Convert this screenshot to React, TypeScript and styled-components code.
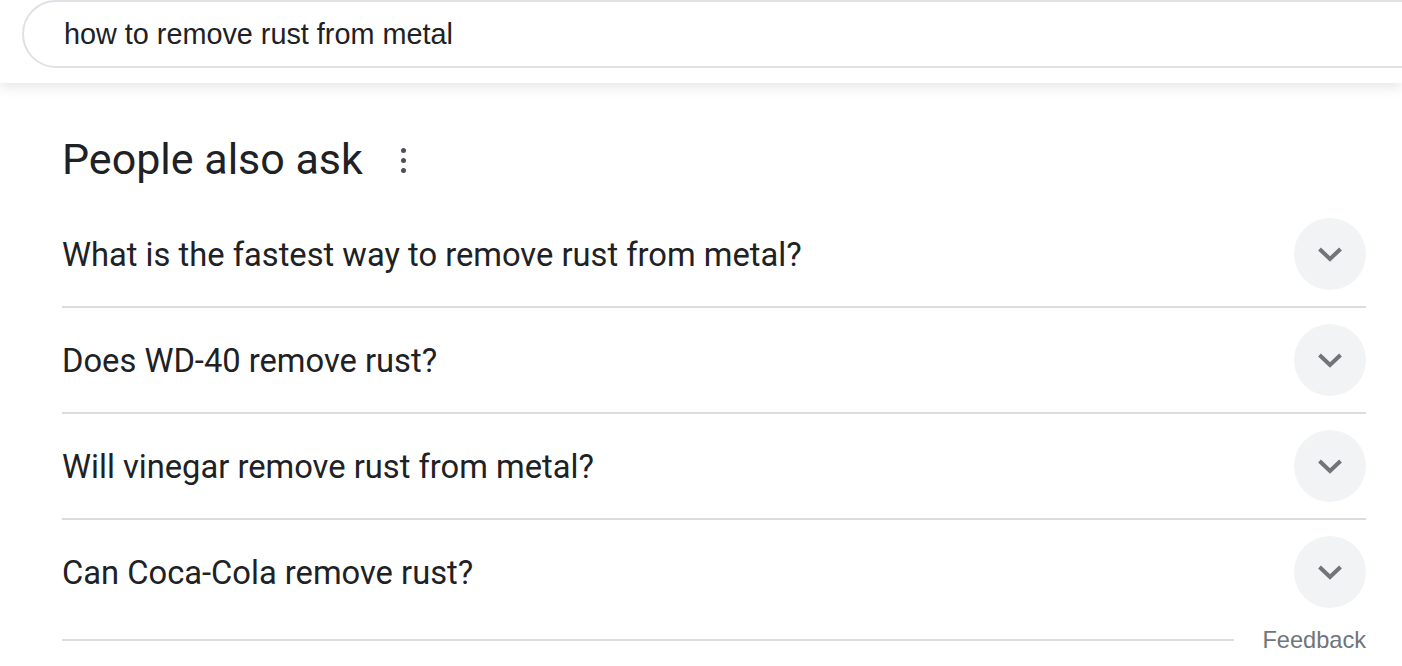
import React from "react";
import styled, { createGlobalStyle } from "styled-components";

const GlobalStyle = createGlobalStyle`
  html, body {
    margin: 0;
    padding: 0;
    background: #ffffff;
    overflow: hidden;
  }
  * { box-sizing: border-box; }
`;

const Page = styled.div`
  width: 1402px;
  height: 666px;
  background: #fff;
  overflow: hidden;
`;

const Header = styled.header`
  height: 83px;
  background: #fff;
  box-shadow: 0 4px 12px rgba(0, 0, 0, 0.1);
  position: relative;
  z-index: 1;
  padding-left: 22px;
`;

const SearchBox = styled.div`
  height: 68px;
  width: 1440px;
  border: 2px solid #dfe1e5;
  border-radius: 34px;
  display: flex;
  align-items: center;
  padding-left: 40px;
  font-family: "Liberation Sans", Arial, sans-serif;
  font-size: 28.8px;
  color: #202124;
`;

const Content = styled.main`
  padding: 50px 36px 0 62px;
`;

const HeadingRow = styled.div`
  display: flex;
  align-items: center;
  gap: 38px;
  height: 52px;
  margin-bottom: 17px;
`;

const Heading = styled.h2`
  margin: 0;
  font-family: Roboto, "Noto Sans", sans-serif;
  font-weight: 400;
  font-size: 43px;
  line-height: 52px;
  color: #202124;
`;

const Dots = styled.div`
  display: flex;
  flex-direction: column;
  gap: 5px;
  margin-top: 2px;
`;

const Dot = styled.span`
  width: 5px;
  height: 5px;
  border-radius: 50%;
  background: #4d5156;
`;

const List = styled.div`
  display: flex;
  flex-direction: column;
`;

const Row = styled.div<{ $last?: boolean }>`
  height: ${(p) => (p.$last ? "104px" : "106px")};
  display: flex;
  align-items: center;
  justify-content: space-between;
  border-bottom: ${(p) => (p.$last ? "none" : "2px solid #dadce0")};
`;

const Question = styled.span`
  font-family: Roboto, "Noto Sans", sans-serif;
  font-size: 32.7px;
  line-height: 40px;
  padding-top: 2px;
  color: #202124;
`;

const ExpandButton = styled.div`
  width: 72px;
  height: 72px;
  border-radius: 50%;
  background: #f1f3f4;
  display: flex;
  align-items: center;
  justify-content: center;
  flex-shrink: 0;
`;

const Footer = styled.div`
  display: flex;
  align-items: center;
  gap: 28px;
  height: 31px;
`;

const FooterLine = styled.div`
  flex: 1;
  height: 2px;
  background: #dadce0;
`;

const Feedback = styled.span`
  font-family: "Liberation Sans", Arial, sans-serif;
  font-size: 23.6px;
  line-height: 31px;
  padding-top: 1px;
  color: #70757a;
`;

const Chevron = () => (
  <svg width="26" height="18" viewBox="0 0 26 18" aria-hidden="true">
    <polyline
      points="2.5,4 13,14 23.5,4"
      fill="none"
      stroke="#70757a"
      strokeWidth="4"
    />
  </svg>
);

const questions = [
  "What is the fastest way to remove rust from metal?",
  "Does WD-40 remove rust?",
  "Will vinegar remove rust from metal?",
  "Can Coca-Cola remove rust?",
];

export default function App() {
  return (
    <Page>
      <GlobalStyle />
      <Header>
        <SearchBox>how to remove rust from metal</SearchBox>
      </Header>
      <Content>
        <HeadingRow>
          <Heading>People also ask</Heading>
          <Dots>
            <Dot />
            <Dot />
            <Dot />
          </Dots>
        </HeadingRow>
        <List>
          {questions.map((q, i) => (
            <Row key={q} $last={i === questions.length - 1}>
              <Question>{q}</Question>
              <ExpandButton>
                <Chevron />
              </ExpandButton>
            </Row>
          ))}
        </List>
        <Footer>
          <FooterLine />
          <Feedback>Feedback</Feedback>
        </Footer>
      </Content>
    </Page>
  );
}
